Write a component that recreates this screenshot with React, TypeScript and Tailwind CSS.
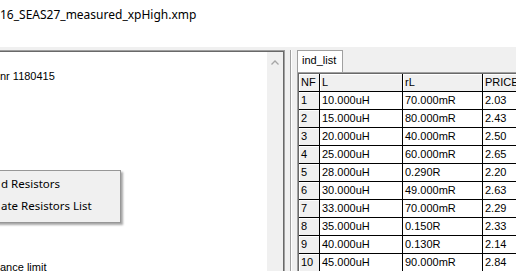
import React from "react";

const rows = [
  ["1", "10.000uH", "70.000mR", "2.03"],
  ["2", "15.000uH", "80.000mR", "2.43"],
  ["3", "20.000uH", "40.000mR", "2.50"],
  ["4", "25.000uH", "60.000mR", "2.65"],
  ["5", "28.000uH", "0.290R", "2.20"],
  ["6", "30.000uH", "49.000mR", "2.63"],
  ["7", "33.000uH", "70.000mR", "2.29"],
  ["8", "35.000uH", "0.150R", "2.33"],
  ["9", "40.000uH", "0.130R", "2.14"],
  ["10", "45.000uH", "90.000mR", "2.84"],
];

function FixedCell({ w, children }: { w: string; children: React.ReactNode }) {
  return (
    <div
      className={`${w} h-[18px] shrink-0 bg-[#f0f0f0] border-r border-b border-[#000] shadow-[inset_1px_1px_0_#ffffff] pl-[2px] leading-[17px] whitespace-nowrap overflow-hidden`}
    >
      {children}
    </div>
  );
}

function Cell({ w, children }: { w: string; children: React.ReactNode }) {
  return (
    <div
      className={`${w} h-[18px] shrink-0 bg-white border-r border-b border-[#000] pl-[2px] leading-[17px] whitespace-nowrap overflow-hidden`}
    >
      {children}
    </div>
  );
}

export default function App() {
  return (
    <div className="relative w-[516px] h-[271px] overflow-hidden bg-white">
      {/* title area */}
      <div className="h-[47px] bg-white pt-[6px] pl-[0px] text-[12px] leading-[17px] text-black [font-family:'Noto_Sans',sans-serif]">
        16_SEAS27_measured_xpHigh.xmp
      </div>

      {/* main area */}
      <div className="flex h-[224px] bg-[#f0f0f0] pt-[3px]">
        {/* memo */}
        <div className="w-[285px] h-full shrink-0 border-t border-r border-[#a0a0a0]">
          <div className="flex h-full border-t border-r border-[#696969]">
            <div className="flex-1 bg-white [font-family:'Liberation_Sans',sans-serif] text-[11px] leading-[13px] text-black">
              <div className="pt-[18px]">nr 1180415</div>
              <div className="mt-[178px]">ance limit</div>
            </div>
            <div className="w-[16px] bg-[#f0f0f0] flex justify-center pt-[8px]">
              <svg width="8" height="5" viewBox="0 0 8 5">
                <polyline points="0.5,4.5 4,1 7.5,4.5" fill="none" stroke="#a6a6a6" strokeWidth="1.3" />
              </svg>
            </div>
          </div>
        </div>

        {/* splitter */}
        <div className="w-[5px] shrink-0" />
        <div className="w-[1px] shrink-0 bg-[#a0a0a0]" />
        <div className="w-[1px] shrink-0 bg-white" />

        {/* right panel */}
        <div className="flex-1 flex flex-col pl-[5px] [font-family:'Liberation_Sans',sans-serif] text-[11px] text-black">
          <div className="h-[22px] flex shrink-0">
            <div className="w-[46px] h-[22px] bg-white border-t border-l border-r border-[#a0a0a0] pl-[4px] leading-[19px] text-[11px]">
              ind_list
            </div>
          </div>
          <div className="flex-1 border-t border-l border-[#a0a0a0] overflow-hidden">
            <div className="h-full border-t border-l border-[#696969] overflow-hidden">
              <div className="flex w-max">
                <FixedCell w="w-[21px]">NF</FixedCell>
                <FixedCell w="w-[83px]">L</FixedCell>
                <FixedCell w="w-[80px]">rL</FixedCell>
                <FixedCell w="w-[64px]">PRICE</FixedCell>
              </div>
              {rows.map((r) => (
                <div key={r[0]} className="flex w-max">
                  <FixedCell w="w-[21px]">{r[0]}</FixedCell>
                  <Cell w="w-[83px]">{r[1]}</Cell>
                  <Cell w="w-[80px]">{r[2]}</Cell>
                  <Cell w="w-[64px]">{r[3]}</Cell>
                </div>
              ))}
            </div>
          </div>
        </div>
      </div>

      {/* context menu */}
      <div className="absolute left-[-10px] top-[170px] w-[131px] h-[53px] bg-[#f0f0f0] border border-[#979797] shadow-[2px_2px_2px_rgba(0,0,0,0.35)] pt-[2px] [font-family:'Noto_Sans',sans-serif] text-[11.5px] text-black">
        <div className="h-[22px] leading-[22px] pl-[10px]">d Resistors</div>
        <div className="h-[22px] leading-[22px] pl-[10px]">ate Resistors List</div>
      </div>
    </div>
  );
}
